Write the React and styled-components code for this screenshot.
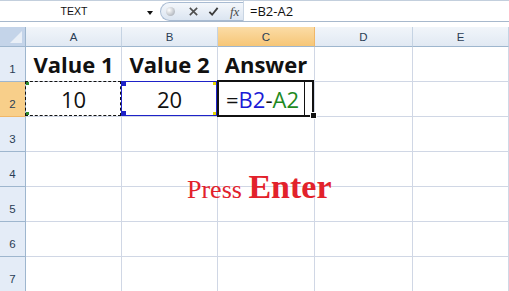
import React from 'react'
import styled, { createGlobalStyle, css } from 'styled-components'

//-----------------------------------------------------------------------------
// Data
//-----------------------------------------------------------------------------
const columns = ['A', 'B', 'C', 'D', 'E']
const rows = [1, 2, 3, 4, 5, 6, 7]

//-----------------------------------------------------------------------------
// Component
//-----------------------------------------------------------------------------
const App = () => {
  return (
    <Page>
      <GlobalStyle />
      <FormulaBar>
        <NameBox>
          TEXT
          <DropArrow />
        </NameBox>
        <FormulaTools>
          <Ball />
          <ToolIcon viewBox="0 0 12 12">
            <path d="M2 2 L10 10 M10 2 L2 10" stroke="#4f4f4f" strokeWidth="1.8" />
          </ToolIcon>
          <ToolIcon viewBox="0 0 12 12">
            <path d="M1.5 6.5 L4.5 9.5 L10.5 2" stroke="#3c3c3c" strokeWidth="2" fill="none" />
          </ToolIcon>
          <Fx>fx</Fx>
        </FormulaTools>
        <FormulaInput>=B2-A2</FormulaInput>
      </FormulaBar>
      <Band />
      <Sheet>
        <Corner />
        {columns.map(col => (
          <ColHeader key={col} selected={col === 'C'}>{col}</ColHeader>
        ))}
        {rows.map(row => (
          <React.Fragment key={row}>
            <RowHeader selected={row === 2}>{row}</RowHeader>
            {columns.map(col => {
              const id = col + row
              if (id === 'A1') return <Cell key={id} bold>Value 1</Cell>
              if (id === 'B1') return <Cell key={id} bold>Value 2</Cell>
              if (id === 'C1') return <Cell key={id} bold>Answer</Cell>
              if (id === 'A2') return <Cell key={id} mark="copy">10</Cell>
              if (id === 'B2') return <Cell key={id} mark="ref">20</Cell>
              if (id === 'C2') {
                return (
                  <Cell key={id} mark="active" align="left">
                    =<Ref color="#1b1bd6">B2</Ref>-<Ref color="#1e8a1e">A2</Ref>
                    <Caret />
                  </Cell>
                )
              }
              return <Cell key={id} />
            })}
          </React.Fragment>
        ))}
      </Sheet>
      <Callout>
        Press <strong>Enter</strong>
      </Callout>
    </Page>
  )
}

//-----------------------------------------------------------------------------
// Styled Components
//-----------------------------------------------------------------------------
const GlobalStyle = createGlobalStyle`
  html, body {
    margin: 0;
    background: #fff;
    overflow: hidden;
  }
`

const Page = styled.div`
  position: relative;
  width: 509px;
  height: 291px;
  overflow: hidden;
  font-family: "Open Sans", "Liberation Sans", sans-serif;
`

const FormulaBar = styled.div`
  display: flex;
  height: 22px;
  box-sizing: border-box;
  border-top: 1px solid #c3cfdd;
  border-bottom: 1px solid #a7b8cc;
  background: #fff;
`

const NameBox = styled.div`
  position: relative;
  width: 160px;
  display: flex;
  align-items: center;
  justify-content: center;
  padding-right: 12px;
  box-sizing: border-box;
  font-family: "Liberation Sans", Arial, sans-serif;
  font-size: 10.5px;
  color: #111;
`

const DropArrow = styled.span`
  position: absolute;
  right: 7px;
  top: 10px;
  border-left: 3.5px solid transparent;
  border-right: 3.5px solid transparent;
  border-top: 4px solid #111;
`

const FormulaTools = styled.div`
  width: 83px;
  display: flex;
  align-items: center;
  gap: 9px;
  padding-left: 5px;
  box-sizing: border-box;
  margin-top: 1px;
  border: 1px solid #a8bbd2;
  border-right: none;
  border-radius: 11px 0 0 11px;
  background: linear-gradient(#f4f7fb, #dbe5f1);
`

const Ball = styled.span`
  width: 9px;
  height: 9px;
  border-radius: 50%;
  background: radial-gradient(circle at 35% 35%, #fff, #b7bcc3 70%);
  margin-right: 4px;
`

const ToolIcon = styled.svg`
  width: 11px;
  height: 11px;
`

const Fx = styled.span`
  font-family: "Liberation Serif", serif;
  font-style: italic;
  font-size: 13px;
  color: #4b4b4b;
  margin-left: 2px;
`

const FormulaInput = styled.div`
  flex: 1;
  display: flex;
  align-items: center;
  padding-left: 6px;
  border-left: 1px solid #c9d5e3;
  font-size: 13px;
  color: #111;
`

const Band = styled.div`
  height: 5px;
  background: #fff;
`

const Sheet = styled.div`
  display: grid;
  grid-template-columns: 26px 96px 96px 97px 98px 1fr;
  grid-template-rows: 20px repeat(7, 35px);
`

const headerBase = css`
  box-sizing: border-box;
  display: flex;
  justify-content: center;
  font-family: "Liberation Sans", Arial, sans-serif;
  font-size: 11.5px;
  color: #2a3d55;
`

const Corner = styled.div`
  position: relative;
  box-sizing: border-box;
  background: #c4d4e9;
  border-right: 1px solid #9eb6ce;
  border-bottom: 1px solid #9eb6ce;

  &::after {
    content: '';
    position: absolute;
    right: 3px;
    bottom: 3px;
    border-left: 12px solid transparent;
    border-bottom: 12px solid #e9eff7;
  }
`

const ColHeader = styled.div`
  ${headerBase}
  align-items: center;
  border-right: 1px solid ${p => (p.selected ? '#f0b768' : '#c5d3e3')};
  border-bottom: 1px solid #9eb6ce;
  background: ${p => (p.selected
    ? 'linear-gradient(#fbdca6, #f6c677)'
    : 'linear-gradient(#f1f5fa, #e1e9f3)')};
`

const RowHeader = styled.div`
  ${headerBase}
  align-items: flex-end;
  padding-bottom: 6px;
  border-right: 1px solid #9eb6ce;
  border-bottom: 1px solid ${p => (p.selected ? '#f0b768' : '#9eb6ce')};
  background: ${p => (p.selected ? '#f8cf8a' : '#e4ecf7')};
`

const marks = {
  copy: css`
    &::after {
      content: '';
      position: absolute;
      inset: -1px 0 0 -1px;
      border: 1px dashed #111;
      background:
        linear-gradient(#2d8a2d, #2d8a2d) left top / 3px 3px no-repeat,
        linear-gradient(#2d8a2d, #2d8a2d) left bottom / 3px 3px no-repeat;
    }
  `,
  ref: css`
    &::after {
      content: '';
      position: absolute;
      inset: -1px 0 0 -1px;
      border: 1px solid #1e22c8;
      background:
        linear-gradient(#1e22c8, #1e22c8) left top / 4px 4px no-repeat,
        linear-gradient(#1e22c8, #1e22c8) left bottom / 4px 4px no-repeat,
        linear-gradient(#e8d800, #e8d800) right top / 3px 3px no-repeat,
        linear-gradient(#e8d800, #e8d800) right bottom / 3px 3px no-repeat;
    }
  `,
  active: css`
    &::after {
      content: '';
      position: absolute;
      inset: -2px 0 -1px -1px;
      border: 2px solid #111;
    }
    &::before {
      content: '';
      position: absolute;
      right: -3px;
      bottom: -3px;
      width: 5px;
      height: 5px;
      background: #111;
      border: 1px solid #fff;
      z-index: 2;
    }
  `,
}

const Cell = styled.div`
  position: relative;
  box-sizing: border-box;
  display: flex;
  align-items: flex-end;
  justify-content: ${p => (p.align === 'left' ? 'flex-start' : 'center')};
  padding: 0 0 3px ${p => (p.align === 'left' ? '8px' : '0')};
  border-right: 1px solid #d0d7e5;
  border-bottom: 1px solid #d0d7e5;
  font-size: 22px;
  font-weight: ${p => (p.bold ? 700 : 400)};
  color: #111;
  line-height: 28px;
  ${p => p.mark && marks[p.mark]}
`

const Ref = styled.span`
  color: ${p => p.color};
`

const Caret = styled.span`
  position: absolute;
  right: 9px;
  top: 0;
  bottom: 0;
  width: 1px;
  background: #111;
`

const Callout = styled.div`
  position: absolute;
  left: 187px;
  top: 168px;
  font-family: "Liberation Serif", "Times New Roman", serif;
  font-size: 26px;
  color: #e2222b;
  white-space: nowrap;

  strong {
    font-size: 34px;
    font-weight: 700;
  }
`

export default App
